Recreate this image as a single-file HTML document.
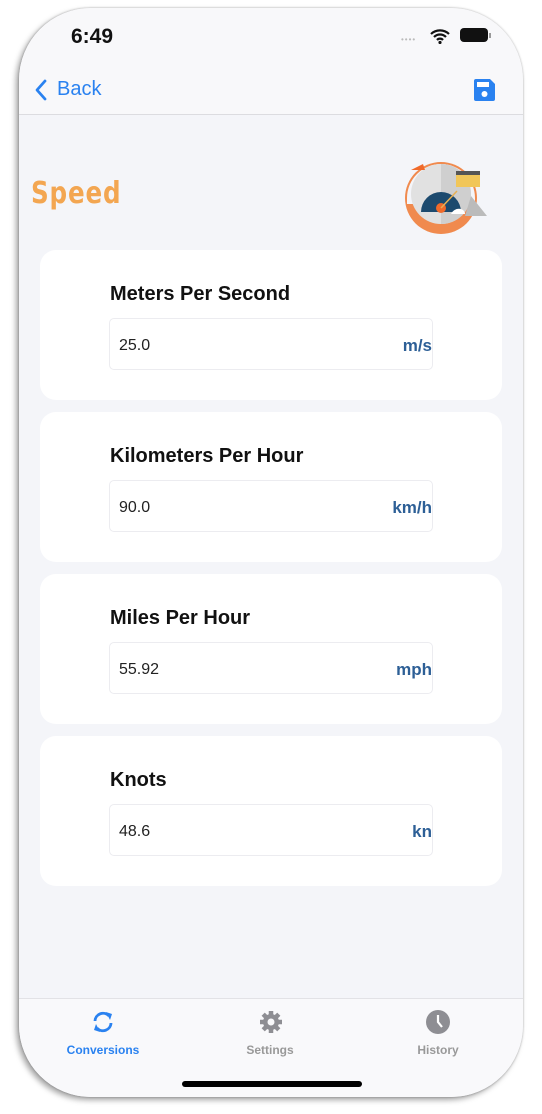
<!DOCTYPE html>
<html><head><style>
body{margin:0;width:542px;height:1114px;background:#fff;position:relative;overflow:hidden;font-family:"Liberation Sans",sans-serif}
.phone{position:absolute;left:19px;top:8px;width:504px;height:1089px;border-radius:72px;background:#f4f5f9;overflow:hidden;box-shadow:-3px 3px 6px rgba(0,0,0,.35),0 0 2px rgba(0,0,0,.3)}
.top{position:absolute;left:0;top:0;width:504px;height:106px;background:#f8f8fa;border-bottom:1px solid #dcdce0}
.time{position:absolute;left:52px;top:17px;font-size:21px;font-weight:bold;color:#111}
.back{position:absolute;left:38px;top:70px;font-size:20px;color:#2a82f0}
.speed{position:absolute;left:12px;top:168px;font-family:"DejaVu Sans",sans-serif;font-weight:bold;font-size:30px;color:#f3a651;letter-spacing:1px;transform:scaleX(.82);transform-origin:left}
.card{position:absolute;left:21px;width:462px;height:150px;background:#fff;border-radius:16px}
.card h3{position:absolute;left:70px;top:33px;margin:0;font-size:20px;font-weight:bold;color:#111}
.inp{position:absolute;left:69px;top:68px;width:324px;height:52px;border:1px solid #ececf0;border-radius:5px;box-sizing:border-box}
.inp .v{position:absolute;left:9px;top:18px;font-size:16px;color:#222}
.inp .u{position:absolute;right:0;top:17px;font-size:17px;font-weight:bold;color:#2d5f96}
.tab{position:absolute;left:0;top:990px;width:504px;height:100px;background:#f9f9fb;border-top:1px solid #e2e2e6}
.tl{position:absolute;top:44px;font-size:12px;font-weight:bold;color:#999;width:120px;text-align:center}
.home{position:absolute;left:182px;top:1081px;width:180px;height:6px;border-radius:3px;background:#000}
</style></head><body>
<div class="phone">
<div class="top">
<div class="time">6:49</div>
<div style="position:absolute;left:382px;top:27px;font-size:8px;color:#bbb;letter-spacing:1px">••••</div>
<svg style="position:absolute;left:411px;top:20px" width="20" height="16" viewBox="0 0 20 16"><path d="M1 6a13 13 0 0 1 18 0M4 9a8.5 8.5 0 0 1 12 0M7 12a4 4 0 0 1 6 0" stroke="#111" stroke-width="2.2" fill="none"/><circle cx="10" cy="14.5" r="1.6" fill="#111"/></svg>
<div style="position:absolute;left:441px;top:20px;width:28px;height:14px;border-radius:4px;background:#111"></div>
<div style="position:absolute;left:470px;top:25px;width:2px;height:5px;background:#999"></div>
<svg style="position:absolute;left:15px;top:71px" width="14" height="22" viewBox="0 0 14 22"><path d="M11 2L3 11l8 9" stroke="#2a82f0" stroke-width="2.8" fill="none" stroke-linecap="round" stroke-linejoin="round"/></svg>
<div class="back">Back</div>
<svg style="position:absolute;left:455px;top:71px" width="21" height="22" viewBox="0 0 21 22"><path d="M0 2a2 2 0 0 1 2-2h14l5 5v15a2 2 0 0 1-2 2H2a2 2 0 0 1-2-2z" fill="#2a82f0"/><rect x="3" y="3" width="12" height="5" fill="#fff"/><circle cx="10.5" cy="15" r="3" fill="#fff"/></svg>
</div>
<div class="speed">Speed</div>
<svg style="position:absolute;left:382px;top:148px" width="92" height="80" viewBox="0 0 92 80">
<circle cx="40" cy="42" r="36" fill="#f08a4e"/>
<path d="M6 42a34 34 0 0 1 68 0v6H6z" fill="#f4f5f9"/>
<circle cx="40" cy="38" r="30" fill="#e1e1e1"/>
<path d="M40 8a30 30 0 0 1 0 60z" fill="#cfcfcf"/>
<path d="M20 56a20 20 0 0 1 40 0z" fill="#1c4a6e"/>
<circle cx="40" cy="52" r="5" fill="#f06a2a"/>
<line x1="40" y1="52" x2="56" y2="35" stroke="#e7b054" stroke-width="1.5"/>
<rect x="55" y="15" width="24" height="16" fill="#f1c659"/><rect x="55" y="15" width="24" height="4" fill="#555"/>
<path d="M10 14l12-6 2 6z" fill="#f06a2a"/>
<path d="M50 58c4-8 14-6 14 0z" fill="#fff"/>
<path d="M64 60l6-20 16 20z" fill="#bbb"/>
</svg>
<div class="card" style="top:242px"><h3>Meters Per Second</h3><div class="inp"><span class="v">25.0</span><span class="u">m/s</span></div></div>
<div class="card" style="top:404px"><h3>Kilometers Per Hour</h3><div class="inp"><span class="v">90.0</span><span class="u">km/h</span></div></div>
<div class="card" style="top:566px"><h3>Miles Per Hour</h3><div class="inp"><span class="v">55.92</span><span class="u">mph</span></div></div>
<div class="card" style="top:728px"><h3>Knots</h3><div class="inp"><span class="v">48.6</span><span class="u">kn</span></div></div>
<div class="tab">
<svg style="position:absolute;left:72px;top:12px" width="24" height="22" viewBox="0 0 24 22"><path d="M4 10a8 8 0 0 1 14-5M20 12a8 8 0 0 1-14 5" stroke="#2a82f0" stroke-width="2.8" fill="none"/><path d="M15 1l6 2-2 6z M9 21l-6-2 2-6z" fill="#2a82f0"/></svg>
<div class="tl" style="left:24px;color:#2a82f0">Conversions</div>
<svg style="position:absolute;left:240px;top:11px" width="24" height="24" viewBox="0 0 24 24"><g fill="#8e8e93"><circle cx="12" cy="12" r="8"/><g stroke="#8e8e93" stroke-width="4.5"><line x1="12" y1="1" x2="12" y2="23"/><line x1="1" y1="12" x2="23" y2="12"/><line x1="4.2" y1="4.2" x2="19.8" y2="19.8"/><line x1="19.8" y1="4.2" x2="4.2" y2="19.8"/></g></g><circle cx="12" cy="12" r="3.5" fill="#f9f9fb"/></svg>
<div class="tl" style="left:191px">Settings</div>
<svg style="position:absolute;left:407px;top:11px" width="24" height="24" viewBox="0 0 24 24"><circle cx="12" cy="12" r="12" fill="#8e8e93"/><path d="M12 5v7l4 5" stroke="#fff" stroke-width="2.2" fill="none"/></svg>
<div class="tl" style="left:359px">History</div>
</div>
</div>
<div class="home"></div>
</body></html>
